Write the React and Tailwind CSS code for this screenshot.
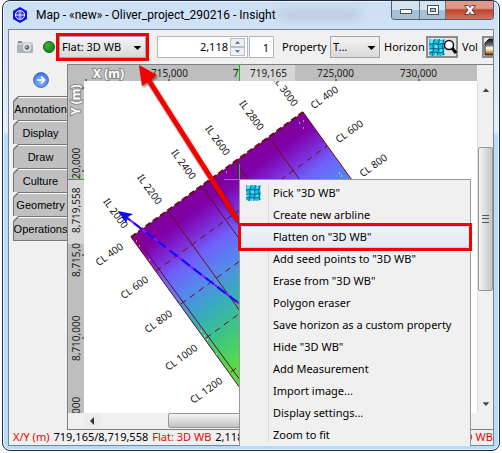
import React, { useState } from 'react';

const tabs = ['Annotation', 'Display', 'Draw', 'Culture', 'Geometry', 'Operations'];

const menuItems = [
  { label: 'Pick "3D WB"', icon: true },
  { label: 'Create new arbline' },
  { label: 'Flatten on "3D WB"', active: true },
  { label: 'Add seed points to "3D WB"' },
  { label: 'Erase from "3D WB"' },
  { label: 'Polygon eraser' },
  { label: 'Save horizon as a custom property' },
  { label: 'Hide "3D WB"' },
  { label: 'Add Measurement' },
  { label: 'Import image...' },
  { label: 'Display settings...' },
  { label: 'Zoom to fit' },
];

// label centres on the map
const inlines = [
  ['IL 2000', 116, 213],
  ['IL 2200', 150, 189],
  ['IL 2400', 184, 164],
  ['IL 2600', 218, 140],
  ['IL 2800', 252, 115],
  ['IL 3000', 286, 91],
];

const crosslines = [
  ['CL 400', 109, 254],
  ['CL 600', 134, 287],
  ['CL 800', 158, 321],
  ['CL 1000', 181, 357],
  ['CL 1200', 206, 390],
  ['CL 400', 324, 97],
  ['CL 600', 349, 131],
  ['CL 800', 373, 165],
];

const GridIcon = ({ className }) => (
  <svg className={className} viewBox="0 0 17 17">
    <path d="M1 0l4 1 4-1 4 1 4-1-1 5 1 4-1 4 1 3-5 1-3-1-4 1-4-1 1-5-1-5z" fill="#16bfe6" />
    <path d="M2 1h3v3H2zM7 6h3v3H7zM12 2h3v2h-3zM12 10h3v3h-3zM2 10h2v2H2zM7 14h3v2H7z" fill="#62e2f7" />
    <path d="M6.500 0l-1.500 6 0.500 5-1.500 6M11.500 0l-1.500 6 0.500 5-1.500 6M15.500 1l-1 6 1 9M1 5.500l5-1 5 1 5-1.500M1 10l5-0.500 5 0.500 5-1M1 14l4-1 6 1 5-1.500" fill="none" stroke="#075f7c" strokeWidth="0.9" />
  </svg>
);

const Caret = () => (
  <svg className="pointer-events-none absolute right-1 top-2 w-[9px] h-2" viewBox="0 0 8 8">
    <path d="M0 2h8L4 6z" fill="#000" />
  </svg>
);

const TitleBar = () => (
  <header className="flex h-7 shrink-0 items-center">
    <svg className="ml-1 w-4 h-4 shrink-0" viewBox="0 0 16 16">
      <path d="M8 0l7 4v8l-7 4-7-4V4z" fill="#1414e6" />
      <circle cx="8" cy="8" r="4.5" fill="none" stroke="#fff" strokeWidth="1" />
      <path d="M8 3v10M3 8h10" stroke="#fff" strokeWidth="1" />
      <ellipse cx="8" cy="8" rx="2" ry="4.5" fill="none" stroke="#8fa0ff" strokeWidth="0.7" />
    </svg>
    <h1 className="ml-2 font-['Roboto',sans-serif] text-[12px] whitespace-nowrap">Map - «new» - Oliver_project_290216 - Insight</h1>
    <div className="ml-1 h-3 w-20 shrink bg-[#a9bdd4]/50 blur-xs"></div>
    <div className="ml-auto flex h-[19px] shrink-0 self-start overflow-hidden rounded-b border border-t-0 border-[#4d6076]">
      <button aria-label="Minimize" className="flex w-7 items-center justify-center border-r border-[#5f738b] bg-linear-to-b from-[#d5e2f0] from-50% to-[#a9bfd6] to-50%">
        <svg className="w-3 h-3" viewBox="0 0 12 12"><rect x="0.5" y="5.5" width="11" height="4" fill="#fff" stroke="#43536b" /></svg>
      </button>
      <button aria-label="Maximize" className="flex w-[26px] items-center justify-center border-r border-[#5f738b] bg-linear-to-b from-[#d5e2f0] from-50% to-[#a9bfd6] to-50%">
        <svg className="w-3 h-3" viewBox="0 0 12 12">
          <rect x="0.5" y="1.5" width="11" height="9" fill="#fff" stroke="#43536b" />
          <rect x="3.5" y="4.5" width="5" height="3" fill="#b7c9dc" stroke="#43536b" />
        </svg>
      </button>
      <button aria-label="Close" className="flex w-[47px] items-center justify-center bg-linear-to-b from-[#e0988a] from-40% via-[#c0402c] via-50% to-[#d4745c]">
        <svg className="w-3 h-3" viewBox="0 0 12 12">
          <path d="M0.500 1.500h4L6 3.500l1.500-2h4L8 6l3.500 4.500h-4L6 8.500l-1.500 2h-4L4 6z" fill="#fff" stroke="#5a3038" strokeWidth="0.9" />
        </svg>
      </button>
    </div>
  </header>
);

const Toolbar = () => {
  const [offset, setOffset] = useState(2118);
  return (
    <div className="flex h-[34px] shrink-0 items-center overflow-hidden pl-2 text-[11px]">
      <button aria-label="Snapshot" className="shrink-0">
        <svg className="w-4 h-3" viewBox="0 0 16 12">
          <rect x="0" y="1.5" width="16" height="10.5" rx="1" fill="#b0b3b5" />
          <rect x="1" y="0" width="4" height="2" fill="#8d9194" />
          <rect x="0" y="2" width="16" height="2" fill="#cdcfd0" />
          <circle cx="10" cy="6.5" r="4" fill="#e8ecee" />
          <circle cx="10" cy="6.5" r="2.4" fill="#5b6b7c" />
          <circle cx="9.500" cy="6" r="1" fill="#b9d0e4" />
        </svg>
      </button>
      <span className="ml-2.5 h-3 w-3 shrink-0 rounded-full border border-[#0c5a10] bg-radial-[at_35%_30%] from-[#3fae3c] to-[#0f7a15]"></span>
      <div className="ml-px flex h-[28px] w-[93px] shrink-0 border-3 border-[#f40000]">
        <div className="relative h-[22px] w-full">
          <select aria-label="Flatten mode" className="h-full w-full appearance-none border border-[#a0a4a8] bg-linear-to-b from-[#f4f4f4] to-[#d9d9d9] pl-0.5 text-[11px]">
            <option>Flat: 3D WB</option>
          </select>
          <Caret />
        </div>
      </div>
      <div className="ml-2 flex h-[22px] w-[91px] shrink-0 border border-[#b4b8bc] bg-white">
        <input
          aria-label="Flatten value"
          className="w-full min-w-0 bg-white pr-0.5 text-right text-[11px]"
          value={offset.toLocaleString('en-US')}
          onChange={(e) => setOffset(Number(e.target.value.replace(/\D/g, '')))}
        />
        <div className="my-px mr-0.5 flex w-[15px] shrink-0 flex-col">
          <button aria-label="Increase" onClick={() => setOffset(offset + 1)} className="flex flex-1 items-center justify-center border border-[#b9bdc4] bg-[#eeeff1]">
            <svg className="w-[5px] h-[3px]" viewBox="0 0 6 3"><path d="M0 3l3-3 3 3z" fill="#3a62a8" /></svg>
          </button>
          <button aria-label="Decrease" onClick={() => setOffset(offset - 1)} className="flex flex-1 items-center justify-center border border-[#b9bdc4] bg-[#eeeff1]">
            <svg className="w-[5px] h-[3px]" viewBox="0 0 6 3"><path d="M0 0l3 3 3-3z" fill="#3a62a8" /></svg>
          </button>
        </div>
      </div>
      <input aria-label="Step" defaultValue="1" className="ml-px h-[22px] w-[25px] shrink-0 border border-[#b4b8bc] bg-white pr-1 text-right text-[11px]" />
      <label htmlFor="property" className="ml-2 w-[48px] shrink-0">Property</label>
      <div className="relative h-[22px] w-[50px] shrink-0">
        <select id="property" className="h-full w-full appearance-none border border-[#a0a4a8] bg-linear-to-b from-[#f4f4f4] to-[#d9d9d9] pl-0.5 text-[11px]">
          <option>T...</option>
        </select>
        <Caret />
      </div>
      <span className="ml-1 w-[42px] shrink-0">Horizon</span>
      <button aria-label="Horizon" className="flex h-[22px] w-8 shrink-0 items-center border-2 border-[#8a8d90] bg-[#e4e4e4]">
        <GridIcon className="w-[17px] h-[17px] shrink-0" />
        <svg className="-ml-0.5 w-3.5 h-4 shrink-0" viewBox="0 0 14 16">
          <path d="M9 9l4 5" stroke="#000" strokeWidth="3" />
          <circle cx="6" cy="6" r="4.5" fill="#fff" stroke="#111" strokeWidth="1.5" />
        </svg>
      </button>
      <span className="ml-1 w-5 shrink-0">Vol</span>
      <button aria-label="Volume" className="h-[22px] w-8 shrink-0 border-2 border-[#8a8d90] bg-[#e4e4e4]">
        <svg className="w-7 h-[18px]" viewBox="0 0 28 18">
          <defs>
            <linearGradient id="vol" x2="0" y2="1">
              <stop offset="0" stopColor="#111" />
              <stop offset="0.4" stopColor="#777" />
              <stop offset="0.55" stopColor="#fff" />
              <stop offset="0.75" stopColor="#f0c070" />
              <stop offset="1" stopColor="#5a2a08" />
            </linearGradient>
          </defs>
          <path d="M1 5l4-4h20v12l-4 4H1z" fill="url(#vol)" stroke="#222" />
        </svg>
      </button>
    </div>
  );
};

const SideTabs = () => (
  <nav className="flex w-[58px] shrink-0 flex-col pl-1">
    <button aria-label="Expand panel" className="ml-5 mt-2 mb-2 h-4 w-4">
      <svg viewBox="0 0 16 16">
        <defs>
          <radialGradient id="go" cx="0.5" cy="0.6" r="0.6">
            <stop offset="0" stopColor="#8fbcff" />
            <stop offset="0.6" stopColor="#5b93f5" />
            <stop offset="1" stopColor="#2f62d8" />
          </radialGradient>
        </defs>
        <circle cx="8" cy="8" r="7.5" fill="url(#go)" stroke="#5a78c0" />
        <path d="M4 8h7M8 4.500L11.500 8 8 11.500" fill="none" stroke="#fff" strokeWidth="1.7" />
      </svg>
    </button>
    <div className="border-b border-[#7a7a7a]">
      {tabs.map((tab) => (
        <button key={tab} className="relative block h-6 w-full bg-[#757575] pl-px pt-px [clip-path:polygon(5px_0,100%_0,100%_100%,0_100%,0_5px)]">
          <span className="flex h-full items-center justify-center border-t border-white bg-[#c0c0c0] font-['Liberation_Sans',sans-serif] text-[11px] whitespace-nowrap [clip-path:polygon(5px_0,100%_0,100%_100%,0_100%,0_5px)]">{tab}</span>
        </button>
      ))}
    </div>
  </nav>
);

const XRuler = () => (
  <svg className="h-4 w-full bg-[#bebebe] text-[10px]" fill="#222">
    <g transform="translate(-68 -65)">
      <rect x="239" y="65" width="56" height="16" fill="#d6d6d6" />
      <text x="93" y="78" className="text-[12px] font-bold" fill="#fff" stroke="#8c8c8c" strokeWidth="2" paintOrder="stroke">X (m)</text>
      <text x="151" y="77">715,000</text>
      <text x="233" y="77">7</text>
      <text x="250" y="77">719,165</text>
      <text x="317" y="77">725,000</text>
      <text x="400" y="77">730,000</text>
      <path d="M86 79v2M169 79v2M336 79v2M419 79v2" stroke="#222" />
      <path d="M239.500 65v16" stroke="#00c800" />
    </g>
  </svg>
);

const YRuler = () => (
  <svg className="h-full w-4 shrink-0 bg-[#bebebe] text-[10px]" fill="#222">
    <g transform="translate(-68 -81)">
      <rect x="68" y="180" width="16" height="64" fill="#d6d6d6" />
      <text transform="translate(80 115) rotate(-90)" className="text-[12px] font-bold" fill="#fff" stroke="#8c8c8c" strokeWidth="2" paintOrder="stroke">Y (m)</text>
      <text transform="translate(80 179) rotate(-90)">20,000</text>
      <text transform="translate(80 233) rotate(-90)">8,719,558</text>
      <text transform="translate(80 277) rotate(-90)">8,715,0</text>
      <text transform="translate(80 361) rotate(-90)">8,710,000</text>
      <text transform="translate(80 414) rotate(-90)">000</text>
      <path d="M82 88h2M82 171h2M82 255h2M82 338h2" stroke="#222" />
      <path d="M68 179.500h16" stroke="#00c800" />
    </g>
  </svg>
);

const MapCanvas = () => (
  <svg className="h-full min-w-0 flex-1 bg-white text-[10px]">
    <defs>
      <linearGradient id="depth" gradientUnits="userSpaceOnUse" x1="210" y1="180" x2="307" y2="313">
        <stop offset="0" stopColor="#7f0098" />
        <stop offset="0.1" stopColor="#8000a8" />
        <stop offset="0.2" stopColor="#7d24d0" />
        <stop offset="0.33" stopColor="#6e62fb" />
        <stop offset="0.47" stopColor="#5686ee" />
        <stop offset="0.64" stopColor="#36aebc" />
        <stop offset="0.8" stopColor="#3cc486" />
        <stop offset="1" stopColor="#56dc44" />
      </linearGradient>
    </defs>
    <g transform="translate(-84 -81)">
      <path d="M131 237L303 112l108 150-172 125z" fill="url(#depth)" />
      <g fill="none" stroke="#700818" strokeWidth="1">
        <path d="M131 237l109 151M134 235l109 149M168 211l108 150M202 187l108 150M235 161l108 150M269 137l108 150M303 112l108 150" />
        <path d="M131 237L303 112" strokeWidth="2" strokeDasharray="6 3" />
        <path d="M156 271L327 146M181 304L352 179M206 338l171-125M231 372l171-125" strokeDasharray="6 5" />
      </g>
      <path d="M136 241h1M139 246h1M149 260h1M201 331h1M204 336h1M207 340h1M216 354h1M226 172h1M299 123h1M303 121h1M303 128h1M339 173h1M341 176h1" stroke="#fff" strokeWidth="1" />
      <path d="M122 214L245 308" stroke="#9010ff" strokeWidth="2" />
      <path d="M122 214L245 308" stroke="#0b0bff" strokeWidth="2" strokeDasharray="10 5" />
      <path d="M118 211l15 3-5 3-2 6z" fill="#0b0bff" />
      <g fill="#111" textAnchor="middle">
        {inlines.map(([label, x, y]) => (
          <text key={label} transform={`translate(${x} ${y}) rotate(54)`} y="4">{label}</text>
        ))}
        {crosslines.map(([label, x, y]) => (
          <text key={label + x} transform={`translate(${x} ${y}) rotate(-36)`} y="4">{label}</text>
        ))}
      </g>
      <path d="M239.500 164v15M224 179.500h15" stroke="#10d020" />
    </g>
  </svg>
);

const VerticalScroll = () => (
  <div className="flex w-4 shrink-0 flex-col border-l border-[#dedede] bg-[#f0f0f0]">
    <svg className="h-[18px] w-full" viewBox="0 0 16 18"><path d="M5 11h7L8.500 7z" fill="#444" /></svg>
    <div className="mt-12 flex h-[144px] items-center justify-center rounded-xs border border-[#979797] bg-linear-to-r from-[#f5f5f5] to-[#c4c4c8]">
      <div className="h-2 w-[7px] border-y border-[#555] py-0.5">
        <div className="h-px bg-[#555]"></div>
      </div>
    </div>
    <svg className="mt-auto h-[18px] w-full" viewBox="0 0 16 18"><path d="M5 7h7l-3.500 4z" fill="#444" /></svg>
  </div>
);

const HorizontalScroll = () => (
  <div className="flex h-4 shrink-0 bg-[#f0f0f0] pl-4">
    <svg className="h-4 w-[17px] shrink-0 bg-[#ececec]" viewBox="0 0 17 16"><path d="M10 4v8L6 8z" fill="#333" /></svg>
    <div className="ml-[67px] h-[15px] w-48 rounded-xs border border-[#979797] bg-linear-to-b from-[#f5f5f5] to-[#c2c2c4]"></div>
  </div>
);

const ContextMenu = () => (
  <ul role="menu" className="absolute left-[230px] top-[149px] h-[267px] w-[232px] overflow-visible border border-b-0 border-[#979797] bg-[#f0f0f0] pt-0.5 text-[11px]">
    <li role="none" className="pointer-events-none absolute inset-y-1 left-7 w-px bg-[#dcdcdc]"></li>
    {menuItems.map((item) => (
      <li key={item.label} role="none" className="relative h-[22px]">
        <button
          role="menuitem"
          className={
            item.active
              ? 'flex h-full w-full items-center rounded-sm border border-[#aecff7] bg-linear-to-b from-[#f0f2f6] to-[#e2e9f4] pl-8 text-left'
              : 'flex h-full w-full items-center pl-[33px] text-left'
          }
        >
          {item.icon && <GridIcon className="absolute left-[5px] top-[3px] w-4 h-4" />}
          {item.label}
        </button>
        {item.active && <span className="pointer-events-none absolute -inset-x-0.5 -inset-y-[3px] border-3 border-[#f40000]"></span>}
      </li>
    ))}
  </ul>
);

const StatusBar = () => (
  <footer className="flex h-[15px] shrink-0 items-center gap-1 overflow-hidden pl-1 text-[11px] whitespace-nowrap">
    <span className="text-[#f00000]">X/Y (m)</span>
    <span>719,165/8,719,558</span>
    <span className="text-[#f00000]">Flat: 3D WB</span>
    <span>2,118</span>
    <span className="ml-auto text-[#f00000]">3D WB</span>
  </footer>
);

const App = () => {
  return (
    <div className="h-screen bg-white px-0.5 pb-0.5 font-['Noto_Sans',sans-serif] text-black">
      <div className="flex h-full flex-col rounded-lg border border-[#1c2c3c] bg-linear-to-b from-[#cbdff4] from-0% via-[#e4effa] via-29% to-[#b8dbfa] to-30% px-[5px] pb-1 shadow-[inset_0_0_0_1px_#eef6fd]">
        <TitleBar />
        <main className="relative flex min-h-0 flex-1 flex-col border border-[#74869a] bg-[#f0f0f0]">
          <Toolbar />
          <div className="flex min-h-0 flex-1">
            <SideTabs />
            <section className="flex min-w-0 flex-1 flex-col border-y border-l border-[#7b7f86]">
              <div className="flex h-4 shrink-0 pr-4">
                <XRuler />
              </div>
              <div className="flex min-h-0 flex-1">
                <YRuler />
                <MapCanvas />
                <VerticalScroll />
              </div>
              <HorizontalScroll />
            </section>
          </div>
          <StatusBar />
          {/* arrow from the menu entry up to the drop-down */}
          <svg className="pointer-events-none absolute left-[121px] top-[33px] h-[165px] w-[115px] drop-shadow-[1px_2px_1px_rgba(0,0,0,0.5)]" viewBox="130 63 115 165">
            <path d="M148 79L237 219" stroke="#f40000" strokeWidth="5" strokeLinecap="round" />
            <path d="M139 65l18 10-15 11z" fill="#f40000" />
          </svg>
          <ContextMenu />
        </main>
      </div>
    </div>
  );
};

export default App;
